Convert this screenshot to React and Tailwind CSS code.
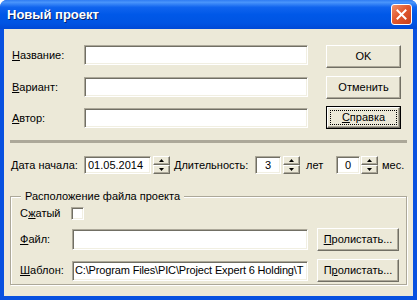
import React from 'react';

const sunken =
  'bg-white border border-t-[#aca899] border-l-[#aca899] border-b-white border-r-white shadow-[inset_1px_1px_0_#716f64,inset_-1px_-1px_0_#f1efe2]';
const raised =
  'bg-[#ece9d8] border border-t-white border-l-white border-b-[#716f64] border-r-[#716f64] shadow-[inset_-1px_-1px_0_#aca899]';

const Field = ({ className = '', children }) => (
  <div className={`${sunken} shrink-0 flex items-center overflow-hidden whitespace-nowrap ${className}`}>
    {children}
  </div>
);

const Btn = ({ className = '', children }) => (
  <div className={`${raised} shrink-0 flex items-center justify-center whitespace-nowrap ${className}`}>{children}</div>
);

const Spin = () => (
  <div className="w-[17px] h-[18px] flex flex-col">
    <div className={`${raised} flex-1 flex items-center justify-center`}>
      <svg width="5" height="3" viewBox="0 0 5 3">
        <path d="M2.5 0 L5 3 L0 3 Z" fill="#000" />
      </svg>
    </div>
    <div className={`${raised} flex-1 flex items-center justify-center`}>
      <svg width="5" height="3" viewBox="0 0 5 3">
        <path d="M0 0 L5 0 L2.5 3 Z" fill="#000" />
      </svg>
    </div>
  </div>
);

export default function App() {
  return (
    <div className="w-[417px] h-[300px] bg-white font-['Liberation_Sans',Arial,sans-serif] text-[11px] leading-[13px] text-black">
      <div className="w-[417px] h-[300px] flex flex-col rounded-t-[7px] overflow-hidden bg-[#0851e0]">
        {/* Title bar */}
        <div className="h-[29px] flex items-center pl-[7px] pr-[5px] bg-[linear-gradient(180deg,#2f7cf3_0%,#4a95fb_8%,#1064ee_25%,#0058e8_50%,#0054e3_80%,#0049d6_100%)]">
          <span className="flex-1 font-bold text-[13px] text-white [text-shadow:1px_1px_0_#0a246a]">Новый проект</span>
          <div className="w-[21px] h-[21px] rounded-[3px] border border-white bg-[linear-gradient(135deg,#f0916c_0%,#e2592f_45%,#c8401c_100%)] flex items-center justify-center">
            <svg width="11" height="11" viewBox="0 0 11 11">
              <path d="M1.5 1.5 L9.5 9.5 M9.5 1.5 L1.5 9.5" stroke="#fff" strokeWidth="2" strokeLinecap="square" />
            </svg>
          </div>
        </div>

        {/* Client area */}
        <div className="mx-[4px] mb-[4px] flex-1 bg-[#ece9d8] flex flex-col">
          <div className="flex pt-[16px]">
            <div className="flex flex-col pl-[8px]">
              <div className="flex items-center h-[20px]">
                <span className="w-[72px]"><u>Н</u>азвание:</span>
                <Field className="w-[224px] h-[20px] px-[3px]" />
              </div>
              <div className="flex items-center h-[20px] mt-[12px]">
                <span className="w-[72px]"><u>В</u>ариант:</span>
                <Field className="w-[224px] h-[20px] px-[3px]" />
              </div>
              <div className="flex items-center h-[20px] mt-[11px]">
                <span className="w-[72px]"><u>А</u>втор:</span>
                <Field className="w-[224px] h-[20px] px-[3px]" />
              </div>
            </div>
            <div className="flex flex-col ml-[18px]">
              <Btn className="w-[75px] h-[23px]">OK</Btn>
              <Btn className="w-[75px] h-[23px] mt-[8px]">Отменить</Btn>
              <div className="w-[75px] h-[23px] mt-[7px] border border-black">
                <div className={`${raised} h-full p-[2px]`}>
                  <div className="h-full border border-dotted border-black flex items-center justify-center">
                    <span><u>С</u>правка</span>
                  </div>
                </div>
              </div>
            </div>
          </div>

          <div className="mt-[11px] mx-[6px] h-[3px] bg-[#aca899]" />

          <div className="flex items-center mt-[13px] pl-[7px] h-[18px]">
            <span className="w-[73px]"><u>Д</u>ата начала:</span>
            <Field className="w-[67px] h-[18px] px-[3px]">01.05.2014</Field>
            <div className="ml-[2px]"><Spin /></div>
            <span className="ml-[4px] w-[81px]"><u>Д</u>лительность:</span>
            <Field className="w-[26px] h-[18px] justify-center">3</Field>
            <div className="ml-[2px]"><Spin /></div>
            <span className="ml-[6px] w-[30px]">лет</span>
            <Field className="w-[24px] h-[18px] justify-center">0</Field>
            <div className="ml-[1px]"><Spin /></div>
            <span className="ml-[4px]">мес.</span>
          </div>

          {/* Group box */}
          <div className="relative mt-[22px] mx-[6px] border border-[#aca899] shadow-[inset_1px_1px_0_#fff,1px_1px_0_#fff] pl-[9px] pr-[6px] pt-[10px] pb-[2px]">
            <span className="absolute -top-[7px] left-[10px] px-[4px] bg-[#ece9d8]">Расположение файла проекта</span>
            <div className="flex items-center h-[13px]">
              <span className="w-[51px]">С<u>ж</u>атый</span>
              <div className={`${sunken} w-[13px] h-[13px]`} />
            </div>
            <div className="flex items-center h-[23px] mt-[8px]">
              <span className="w-[52px]"><u>Ф</u>айл:</span>
              <Field className="w-[236px] h-[21px] px-[3px]" />
              <Btn className="ml-[9px] w-[82px] h-[23px]"><span><u>П</u>ролистать...</span></Btn>
            </div>
            <div className="flex items-center h-[23px] mt-[8px]">
              <span className="w-[52px]"><u>Ш</u>аблон:</span>
              <Field className="w-[236px] h-[20px] pl-[2px] tracking-[-0.15px]">C:\Program Files\PIC\Project Expert 6 Holding\T</Field>
              <Btn className="ml-[9px] w-[82px] h-[23px]"><span>П<u>р</u>олистать...</span></Btn>
            </div>
          </div>
        </div>
      </div>
    </div>
  );
}
